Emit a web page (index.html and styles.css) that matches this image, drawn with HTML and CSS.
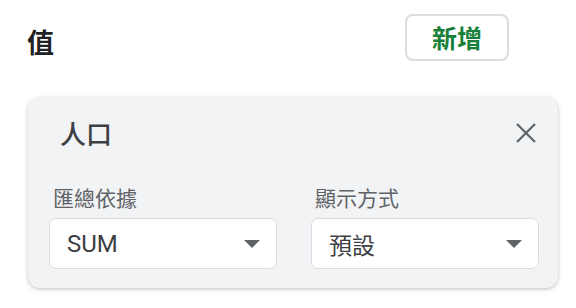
FILE: index.html
```html
<!DOCTYPE html>
<html lang="zh-Hant">
<head>
<meta charset="utf-8">
<link rel="stylesheet" href="styles.css">
</head>
<body>
<div class="page">
  <div class="top">
    <div class="heading">值</div>
    <button class="add">新增</button>
  </div>
  <div class="card">
    <div class="card-head">
      <div class="card-title">人口</div>
      <svg class="close" width="22" height="22" viewBox="0 0 22 22"><path d="M2 2 L20 20 M20 2 L2 20" stroke="#5f6368" stroke-width="2.2" fill="none"/></svg>
    </div>
    <div class="fields">
      <div class="field">
        <div class="label">匯總依據</div>
        <div class="select"><span class="value latin">SUM</span><span class="arrow"></span></div>
      </div>
      <div class="field">
        <div class="label">顯示方式</div>
        <div class="select"><span class="value">預設</span><span class="arrow"></span></div>
      </div>
    </div>
  </div>
</div>
</body>
</html>
```
FILE: styles.css
```css
html, body { margin: 0; padding: 0; background: #fff; }
body { font-family: "Roboto", "Noto Sans CJK TC", sans-serif; color: #202124; }
.page { width: 576px; height: 308px; box-sizing: border-box; padding: 14px 18px 0 28px; }
.top { display: flex; justify-content: space-between; align-items: center; padding-right: 49px; }
.heading { font-family: "Noto Sans CJK TC", sans-serif; font-size: 27px; font-weight: 700; line-height: 30px; color: #202124; margin-top: 8px; margin-left: -1px; }
.add { font-family: "Noto Sans CJK TC", sans-serif; font-size: 25px; font-weight: 700; color: #188038; background: #fff; border: 2px solid #dadce0; border-radius: 8px; width: 104px; height: 47px; padding: 0; line-height: 1; }
.card { margin-top: 36px; width: 530px; box-sizing: border-box; background: #f1f3f4; border-radius: 12px; box-shadow: 0 1px 3px rgba(60,64,67,0.25), 0 2px 6px rgba(60,64,67,0.1); padding: 22px 19px 19px 21px; }
.card-head { display: flex; justify-content: space-between; align-items: center; padding-left: 11px; padding-right: 2px; height: 28px; }
.card-title { font-family: "Noto Sans CJK TC", sans-serif; font-size: 26px; font-weight: 500; color: #3c4043; line-height: 28px; }
.fields { display: flex; gap: 34px; margin-top: 38px; }
.field { width: 228px; }
.label { font-family: "Noto Sans CJK TC", sans-serif; font-size: 21px; color: #5f6368; line-height: 24px; padding-left: 4px; margin-bottom: 9px; }
.select { height: 51px; box-sizing: border-box; background: #fff; border: 1.5px solid #dadce0; border-radius: 7px; display: flex; align-items: center; justify-content: space-between; padding: 0 16px 0 17px; }
.value { font-family: "Noto Sans CJK TC", sans-serif; font-size: 23px; color: #3c4043; }
.value.latin { font-family: "Roboto", sans-serif; font-size: 24px; }
.arrow { width: 0; height: 0; border-left: 8px solid transparent; border-right: 8px solid transparent; border-top: 8px solid #5f6368; }
```
